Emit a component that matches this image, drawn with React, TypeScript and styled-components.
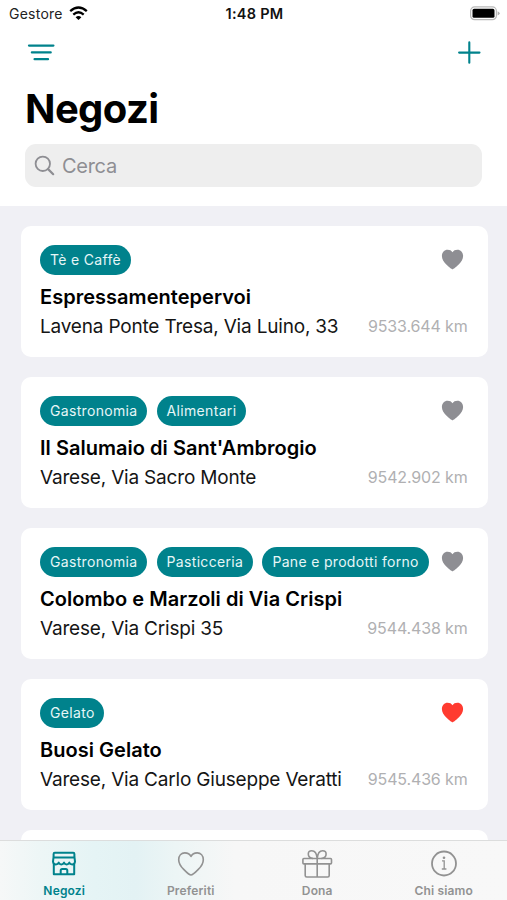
import React from "react";
import styled, { createGlobalStyle } from "styled-components";

const TEAL = "#00828c";
const GREY = "#8e8e93";

const GlobalStyle = createGlobalStyle`
  * { box-sizing: border-box; }
  body { margin: 0; background: #fff; overflow: hidden; font-family: Inter, "Liberation Sans", sans-serif; }
  svg { display: block; flex: none; }
`;

const Screen = styled.div`
  display: flex;
  flex-direction: column;
  width: 507px;
  height: 900px;
  background: #f0f0f5;
  overflow: hidden;
`;

const Header = styled.header`
  flex: none;
  height: 206px;
  background: #fff;
`;

const StatusBar = styled.div`
  display: grid;
  grid-template-columns: 1fr auto 1fr;
  align-items: center;
  height: 27px;
  padding: 0 7px 0 9px;
`;

const Carrier = styled.div`
  display: flex;
  align-items: center;
  gap: 6px;
  font-size: 14px;
  letter-spacing: 0.25px;
  color: #222;
`;

const Clock = styled.div`
  font-size: 14.5px;
  font-weight: 600;
  letter-spacing: 0.25px;
  color: #111;
`;

const BatterySlot = styled.div`
  display: flex;
  justify-content: flex-end;
`;

const NavBar = styled.div`
  display: flex;
  align-items: center;
  justify-content: space-between;
  height: 50px;
  padding: 0 26px 0 27px;
  color: ${TEAL};
`;

const PageTitle = styled.h1`
  margin: 6px 0 0 25px;
  font-size: 40px;
  line-height: 52px;
  font-weight: 700;
  letter-spacing: -0.6px;
  color: #000;
`;

const SearchField = styled.div`
  display: flex;
  align-items: center;
  gap: 7px;
  height: 43px;
  margin: 9px 25px 0;
  padding-left: 9px;
  border-radius: 11px;
  background: #eee;
  color: ${GREY};
  font-size: 20px;
  letter-spacing: -0.3px;
`;

const CardList = styled.main`
  flex: 1;
  min-height: 0;
  display: flex;
  flex-direction: column;
  gap: 20px;
  padding: 20px 19.5px 0 20.5px;
  overflow: hidden;
`;

const Card = styled.article`
  flex: none;
  height: 131px;
  padding: 19px 20px 0 19.5px;
  border-radius: 10px;
  background: #fff;
`;

const CardTop = styled.div`
  display: flex;
  align-items: center;
  justify-content: space-between;
  height: 30px;
  padding-right: 3.5px;
`;

const Chips = styled.div`
  display: flex;
  gap: 9.5px;
`;

const Chip = styled.span`
  height: 30px;
  padding: 0 9.7px 0 10px;
  border-radius: 15px;
  background: ${TEAL};
  color: #e6f6f7;
  font-size: 14px;
  line-height: 30px;
  letter-spacing: 0.32px;
  white-space: nowrap;
`;

const ShopName = styled.h2`
  margin: 8px 0 0;
  font-size: 20px;
  line-height: 29px;
  font-weight: 600;
  letter-spacing: 0.03px;
  color: #000;
`;

const ShopLine = styled.div`
  display: flex;
  align-items: center;
  justify-content: space-between;
  height: 29px;
  white-space: nowrap;
`;

const Address = styled.span`
  font-size: 19px;
  line-height: 29px;
  letter-spacing: -0.19px;
  color: #151515;
`;

const Distance = styled.span`
  font-size: 16px;
  line-height: 29px;
  letter-spacing: -0.15px;
  color: #b0b0b2;
`;

const PeekCard = styled.div`
  flex: none;
  height: 40px;
  border-radius: 10px;
  background: #fff;
`;

const TabBar = styled.nav`
  flex: none;
  display: grid;
  grid-template-columns: repeat(4, 1fr);
  height: 60px;
  padding-left: 1px;
  border-top: 1px solid #dcdddd;
  background: linear-gradient(90deg, #f6f8f8 0, #edf6f6 40px, #e5f4f5 95px, #e3f2f4 135px, #ecf5f5 175px, #f7f7f7 235px, #f8f8f8 100%);
`;

const Tab = styled.div<{ $active?: boolean }>`
  display: flex;
  flex-direction: column;
  align-items: center;
  padding-top: 7px;
  gap: 4px;
  color: ${(p) => (p.$active ? TEAL : "#929292")};
  font-size: 12px;
  line-height: 16px;
  font-weight: 600;
  letter-spacing: 0.17px;
`;

const WifiIcon = () => (
  <svg width="19" height="15" viewBox="0 0 19 15" fill="none" stroke="#000" strokeWidth="2.3">
    <path d="M1.2 5.2Q9.5-2.2 17.8 5.2" />
    <path d="M4.3 8.6Q9.5 4 14.7 8.6" />
    <path d="M6.6 11.2Q9.5 8.8 12.4 11.2L9.5 14Z" fill="#000" stroke="none" />
  </svg>
);

const BatteryIcon = () => (
  <svg width="31" height="15" viewBox="0 0 31 15" fill="none">
    <rect x="1.6" y="0.9" width="25.8" height="12.8" rx="4" stroke="#b9b9b9" strokeWidth="1.2" />
    <rect x="3.5" y="2.8" width="22" height="9" rx="1.6" fill="#000" />
    <path d="M28.6 5.2Q30.6 6 30.6 7.3T28.6 9.4Z" fill="#b0b0b0" />
  </svg>
);

const FilterIcon = () => (
  <svg width="28" height="20" viewBox="0 0 28 20" stroke="currentColor" strokeWidth="2.3" strokeLinecap="round">
    <path d="M2 3.6H26.4M4.9 10.4H23.7M7.6 17.2H21" />
  </svg>
);

const PlusIcon = () => (
  <svg width="23" height="23" viewBox="0 0 23 23" stroke="currentColor" strokeWidth="2.1" strokeLinecap="round">
    <path d="M11.3 1.4V21.8M1.1 11.6H21.5" />
  </svg>
);

const SearchIcon = () => (
  <svg width="21" height="21" viewBox="0 0 21 21" fill="none" stroke="currentColor" strokeWidth="1.8" strokeLinecap="round">
    <circle cx="8.8" cy="8.8" r="7.2" />
    <path d="M14.1 14.1L19.2 19.2" strokeWidth="2.2" />
  </svg>
);

const CardHeart = ({ liked }: { liked?: boolean }) => (
  <svg width="23" height="22" viewBox="0 0 23 22" fill={liked ? "#ff3b30" : GREY}>
    <path d="M11.5 20.2C10.9 20.2 7.5 17.7 5.3 15.4C2.7 12.8 0.9 10.1 0.9 6.9C0.9 3.3 3.4 0.7 6.6 0.7C8.7 0.7 10.5 1.5 11.5 3.2C12.5 1.5 14.3 0.7 16.4 0.7C19.6 0.7 22.1 3.3 22.1 6.9C22.1 10.1 20.3 12.8 17.7 15.4C15.5 17.7 12.1 20.2 11.5 20.2Z" />
  </svg>
);

const StoreIcon = () => (
  <svg width="32" height="31" viewBox="0 0 32 31" fill="none" stroke="currentColor" strokeWidth="2" strokeLinejoin="round">
    <path d="M5.6 9V6Q5.6 4.8 6.8 4.8H25.2Q26.4 4.8 26.4 6V9" />
    <path d="M5.5 9.4H26.5L27 13.6Q26.7 16.4 24.2 16.4Q22.2 16.4 21.3 14.6Q20.4 16.4 18.7 16.4Q16.9 16.4 16 14.6Q15.1 16.4 13.3 16.4Q11.6 16.4 10.7 14.6Q9.8 16.4 7.8 16.4Q5.3 16.4 5 13.6Z" />
    <path d="M5.8 15.5V26.2H26.2V15.5" />
    <path d="M12.7 26V22.6Q12.7 21 14.2 21H17.8Q19.3 21 19.3 22.6V26" />
  </svg>
);

const HeartIcon = () => (
  <svg width="32" height="31" viewBox="0 0 32 31" fill="none" stroke="currentColor" strokeWidth="1.6" strokeLinejoin="round">
    <path d="M16 27C15.2 27 11.2 24 8.7 21.4C5.6 18.3 3.7 15.2 3.7 11.7C3.7 7.7 6.3 4.9 9.8 4.9C12.5 4.9 14.8 6.1 16 8.5C17.2 6.1 19.5 4.9 22.2 4.9C25.7 4.9 28.3 7.7 28.3 11.7C28.3 15.2 26.4 18.3 23.3 21.4C20.8 24 16.8 27 16 27Z" />
  </svg>
);

const GiftIcon = () => (
  <svg width="32" height="31" viewBox="0 0 32 31" fill="none" stroke="currentColor" strokeWidth="1.6">
    <rect x="1.9" y="10.5" width="28.6" height="5.4" rx="1" />
    <path d="M4.2 15.9V27.5Q4.2 29 5.7 29H26.7Q28.2 29 28.2 27.5V15.9M16.2 10.5V29" />
    <path d="M16.2 10.5C15.8 6.2 13.8 2.8 10.8 2.8C8.7 2.8 7.3 4.1 7.3 6C7.3 8.4 9.2 10.2 12 10.5M16.2 10.5C16.6 6.2 18.6 2.8 21.6 2.8C23.7 2.8 25.1 4.1 25.1 6C25.1 8.4 23.2 10.2 20.4 10.5" />
  </svg>
);

const InfoIcon = () => (
  <svg width="32" height="31" viewBox="0 0 32 31" fill="none" stroke="currentColor" strokeWidth="1.8">
    <circle cx="16" cy="15.5" r="12" />
    <path d="M14 12.9H16.2V20.8M13.8 21H18.4" strokeWidth="1.3" />
    <circle cx="16" cy="9.8" r="1.3" fill="currentColor" stroke="none" />
  </svg>
);

interface Shop {
  tags: string[];
  name: string;
  address: string;
  distance: string;
  liked?: boolean;
}

const shops: Shop[] = [
  { tags: ["Tè e Caffè"], name: "Espressamentepervoi", address: "Lavena Ponte Tresa, Via Luino, 33", distance: "9533.644 km" },
  { tags: ["Gastronomia", "Alimentari"], name: "Il Salumaio di Sant'Ambrogio", address: "Varese, Via Sacro Monte", distance: "9542.902 km" },
  { tags: ["Gastronomia", "Pasticceria", "Pane e prodotti forno"], name: "Colombo e Marzoli di Via Crispi", address: "Varese, Via Crispi 35", distance: "9544.438 km" },
  { tags: ["Gelato"], name: "Buosi Gelato", address: "Varese, Via Carlo Giuseppe Veratti", distance: "9545.436 km", liked: true },
];

export default function App() {
  return (
    <>
      <GlobalStyle />
      <Screen>
        <Header>
          <StatusBar>
            <Carrier>
              Gestore
              <WifiIcon />
            </Carrier>
            <Clock>1:48 PM</Clock>
            <BatterySlot>
              <BatteryIcon />
            </BatterySlot>
          </StatusBar>
          <NavBar>
            <FilterIcon />
            <PlusIcon />
          </NavBar>
          <PageTitle>Negozi</PageTitle>
          <SearchField>
            <SearchIcon />
            Cerca
          </SearchField>
        </Header>
        <CardList>
          {shops.map((shop) => (
            <Card key={shop.name}>
              <CardTop>
                <Chips>
                  {shop.tags.map((tag) => (
                    <Chip key={tag}>{tag}</Chip>
                  ))}
                </Chips>
                <CardHeart liked={shop.liked} />
              </CardTop>
              <ShopName>{shop.name}</ShopName>
              <ShopLine>
                <Address>{shop.address}</Address>
                <Distance>{shop.distance}</Distance>
              </ShopLine>
            </Card>
          ))}
          <PeekCard />
        </CardList>
        <TabBar>
          <Tab $active>
            <StoreIcon />
            Negozi
          </Tab>
          <Tab>
            <HeartIcon />
            Preferiti
          </Tab>
          <Tab>
            <GiftIcon />
            Dona
          </Tab>
          <Tab>
            <InfoIcon />
            Chi siamo
          </Tab>
        </TabBar>
      </Screen>
    </>
  );
}
